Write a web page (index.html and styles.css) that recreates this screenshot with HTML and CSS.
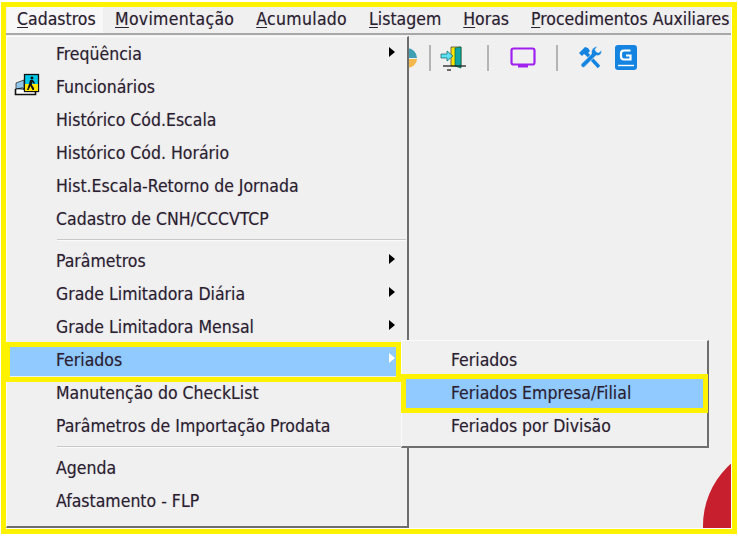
FILE: index.html
```html
<!DOCTYPE html>
<html lang="pt-BR">
<head>
    <meta charset="UTF-8">
    <title>Cadastros - Feriados</title>
    <link rel="stylesheet" href="styles.css">
</head>
<body>
    <div class="frame">
        <div class="menubar">
            <span class="top active"><u>C</u>adastros</span>
            <span class="top wide"><u>M</u>ovimentação</span>
            <span class="top wide"><u>A</u>cumulado</span>
            <span class="top"><u>L</u>istagem</span>
            <span class="top"><u>H</u>oras</span>
            <span class="top"><u>P</u>rocedimentos Auxiliares</span>
        </div>

        <div class="toolbar">
            <svg class="ico-pie" width="10" height="20" viewBox="0 0 10 20">
                <path d="M0 0a10 10 0 0 1 10 10H0z" fill="#3f9fb5"/>
                <path d="M0 11h10a10 9 0 0 1-10 9z" fill="#f2b84b"/>
            </svg>
            <span class="sep sep-a"></span>
            <svg class="ico-door" width="26" height="26" viewBox="0 0 26 26">
                <path d="M11 2h10v19H11z" fill="#ffe600" stroke="#333" stroke-width=".7"/>
                <path d="M15 3l6-1v21l-6-2z" fill="#12a5a5" stroke="#063" stroke-width=".7"/>
                <path d="M1 9h6V6l6 5-6 5v-3H1z" fill="#5fe0ee" stroke="#06606a" stroke-width=".7"/>
                <path d="M3 21h23" stroke="#222" stroke-width="1.3"/>
                <path d="M7 25h4" stroke="#222" stroke-width="1.3"/>
            </svg>
            <span class="sep sep-b"></span>
            <svg class="ico-tv" width="26" height="24" viewBox="0 0 26 24">
                <rect x="1.500" y="2.500" width="23" height="16" rx="2" fill="none" stroke="#a020f0" stroke-width="2.200"/>
                <path d="M8 19h10v2.500H8z" fill="#a020f0"/>
            </svg>
            <span class="sep sep-c"></span>
            <svg class="ico-tools" width="26" height="25" viewBox="0 0 26 25">
                <path d="M2 8l6-6 3 1 2 3-4 4-2-1-2 2z" fill="#1584e0"/>
                <path d="M9 8l13 14" fill="none" stroke="#1584e0" stroke-width="3.400"/>
                <path d="M20.500 1.500l-2.500 3 1.500 2.500 2.500.5 2.500-2.500c.8 3.500-2 6.500-5.500 5.500L8 21.500c-2 2.500-5.500-.8-3.300-3L14.500 9c-1-4 2.500-8 6-7.500z" fill="#1584e0" stroke="#f0f0f0" stroke-width=".7"/>
            </svg>
            <svg class="ico-guide" width="22" height="25" viewBox="0 0 22 25">
                <path d="M3 0h16a3 3 0 0 1 3 3v19a3 3 0 0 1-3 3H3a3 3 0 0 1-3-3V3a3 3 0 0 1 3-3z" fill="#1584e0"/>
                <path d="M3 20.500h16" stroke="#fff" stroke-width="1.400"/>
                <path d="M15.500 5.500H9a3 3 0 0 0-3 3v3a3 3 0 0 0 3 3h6.500v-4H11" fill="none" stroke="#fff" stroke-width="2.200"/>
            </svg>
        </div>

        <div class="logo"></div>

        <div class="menu main-menu">
            <div class="item sub">Freqüência</div>
            <div class="item">
                <svg class="item-ico" width="26" height="24" viewBox="0 0 26 24">
                    <path d="M2 10l8-3v10H2z" fill="#8fc5e8" stroke="#333" stroke-width=".8"/>
                    <path d="M1.500 16v5.500h20V19" fill="#fff" stroke="#111" stroke-width="1.600"/>
                    <path d="M1.500 16l7-1 4 3" fill="none" stroke="#111" stroke-width="1"/>
                    <rect x="10.500" y="1.500" width="14" height="17" fill="#00c8e8" stroke="#111" stroke-width="1.300"/>
                    <rect x="11" y="11" width="13" height="7" fill="#ffe600"/>
                    <path d="M18 3.500a1.500 1.500 0 1 1-.1 0zM16 7h3l2 3-1 1-2-2v3l2 3v2h-1.500l-2-4-2 4H13l2-6z" fill="#111"/>
                </svg>
                Funcionários
            </div>
            <div class="item">Histórico Cód.Escala</div>
            <div class="item">Histórico Cód. Horário</div>
            <div class="item">Hist.Escala-Retorno de Jornada</div>
            <div class="item">Cadastro de CNH/CCCVTCP</div>
            <div class="divider"></div>
            <div class="item sub">Parâmetros</div>
            <div class="item sub">Grade Limitadora Diária</div>
            <div class="item sub">Grade Limitadora Mensal</div>
            <div class="item sub selected">Feriados</div>
            <div class="item">Manutenção do CheckList</div>
            <div class="item">Parâmetros de Importação Prodata</div>
            <div class="divider"></div>
            <div class="item">Agenda</div>
            <div class="item">Afastamento - FLP</div>
        </div>

        <div class="menu side-menu">
            <div class="item">Feriados</div>
            <div class="item selected">Feriados Empresa/Filial</div>
            <div class="item">Feriados por Divisão</div>
        </div>

        <div class="mark mark-row"></div>
        <div class="mark mark-side"></div>
    </div>
</body>
</html>
```

FILE: styles.css
```css
* { box-sizing: border-box; }
body {
    margin: 0;
    background-color: #fff;
    font-family: "DejaVu Sans Condensed", "DejaVu Sans", sans-serif;
    font-stretch: condensed;
    font-size: 17.5px;
    color: #2a2030;
    text-shadow: 0 0 1px rgba(60, 40, 70, .35);
}
.frame {
    position: relative;
    width: 736px;
    height: 532px;
    margin: 2px 0 0 1px;
    border: 5px solid #fff200;
    background-color: #f0f0f0;
    overflow: hidden;
}
.frame::after {
    content: "";
    position: absolute;
    inset: 0;
    border-right: 1px solid #fff;
    border-bottom: 1px solid #fff;
}
u { text-underline-offset: 2px; }

/* barra de menu */
.menubar {
    display: flex;
    height: 28px;
    padding-left: 1px;
    border-bottom: 2px solid #a8a8a8;
    line-height: 25px;
    white-space: nowrap;
}
.top {
    padding: 0 11px;
    height: 26px;
}
.wide { letter-spacing: .3px; }
.active {
    background-color: #f8f8f8;
    width: 96px;
    padding-left: 10px;
    margin-right: 1px;
}

/* barra de ferramentas */
.toolbar {
    display: flex;
    align-items: center;
    height: 45px;
    padding: 0 0 0 401px;
}
.sep {
    width: 2px;
    height: 26px;
    background-color: #b4b4b4;
}
.ico-pie { flex: none; }
.sep-a { margin-left: 12px; }
.ico-door { margin-left: 9px; }
.sep-b { margin-left: 21px; }
.ico-tv { margin-left: 21px; }
.sep-c { margin-left: 20px; }
.ico-tools { margin-left: 19px; }
.ico-guide { margin-left: 12px; }

/* logo vermelho */
.logo {
    position: absolute;
    left: 697px;
    top: 436px;
    width: 165px;
    height: 165px;
    border-radius: 50%;
    background: linear-gradient(135deg, #c71f2e 50%, #e0202f 50%);
}

/* menus */
.menu {
    position: absolute;
    background-color: #f0f0f0;
    border: 1px solid #fbfbfb;
    border-right: 2px solid #6e6e6e;
    border-bottom: 2px solid #6e6e6e;
}
.main-menu {
    left: 0;
    top: 29px;
    width: 403px;
    height: 492px;
}
.side-menu {
    left: 395px;
    top: 333px;
    width: 308px;
    height: 108px;
    padding-top: 2px;
}
.item {
    position: relative;
    height: 33px;
    padding-left: 49px;
    line-height: 35px;
    white-space: nowrap;
}
.sub::after {
    content: "";
    position: absolute;
    right: 12px;
    top: 10px;
    border-left: 6px solid #000;
    border-top: 5px solid transparent;
    border-bottom: 5px solid transparent;
}
.selected { background-color: #90caff; }
.sub.selected::after { border-left-color: #fff; }
.item-ico {
    position: absolute;
    left: 7px;
    top: 3px;
}
.divider {
    height: 9px;
    margin: 0 1px 0 50px;
    background: linear-gradient(#f0f0f0 4px, #c8c8c8 4px, #c8c8c8 5px, #fbfbfb 5px, #fbfbfb 6px, #f0f0f0 6px);
}

/* marcas amarelas da captura */
.mark {
    position: absolute;
    border: 5px solid #fff200;
}
.mark-row {
    left: -1px;
    top: 335px;
    width: 396px;
    height: 40px;
}
.mark-side {
    left: 395px;
    top: 367px;
    width: 307px;
    height: 39px;
}
```
